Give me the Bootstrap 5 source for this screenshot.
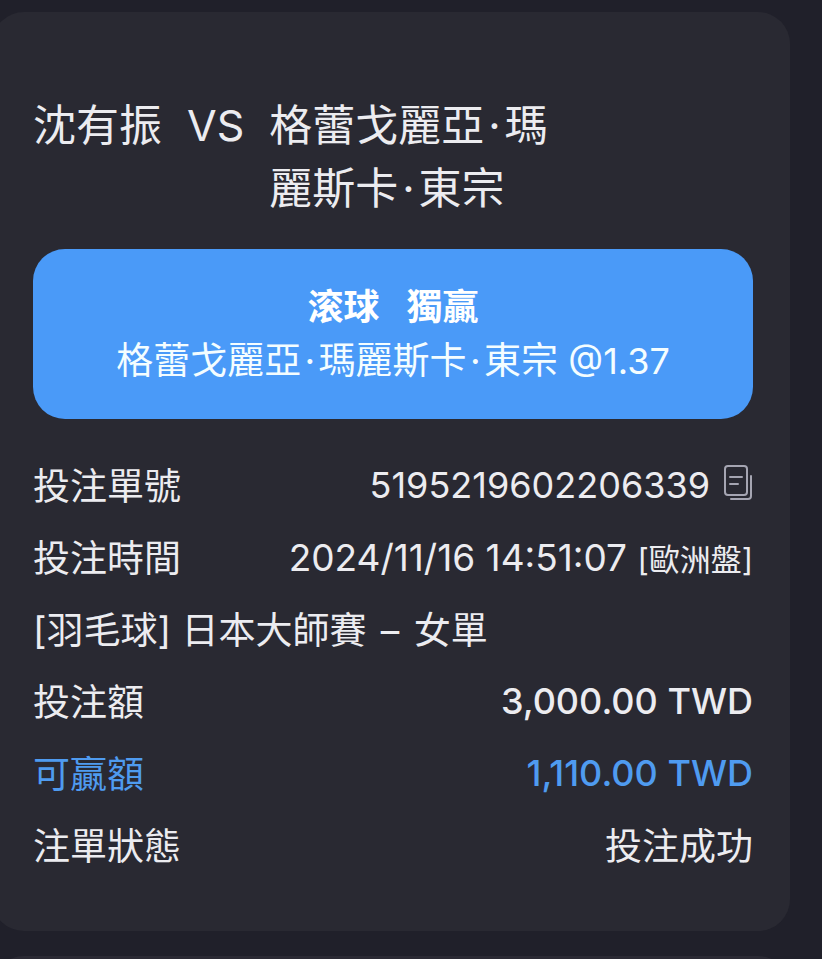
<!DOCTYPE html>
<html lang="zh-Hant">
<head>
<meta charset="utf-8">
<meta name="viewport" content="width=device-width, initial-scale=1">
<title>投注單</title>
<link href="https://cdn.jsdelivr.net/npm/bootstrap@5.3.0/dist/css/bootstrap.min.css" rel="stylesheet">
<style>
  body {
    background: #20202a;
    color: #ececf0;
    font-family: Inter, "Noto Sans CJK TC", sans-serif;
    font-size: 37px;
    line-height: 54px;
  }
  .page { height: 100vh; min-height: 956px; padding: 12px 32px 0 0; gap: 25px; }
  .slip {
    margin-left: -8px;
    padding: 82px 37px 48px 41px;
    border-radius: 32px;
    background: #292932;
  }
  .slip-next { height: 200px; margin-left: -8px; border-radius: 32px; background: #2b2a34; }
  .teams { font-size: 43px; line-height: 63px; gap: 25px; }
  .away { max-width: 284px; }
  .pick { margin-top: 29px; padding: 31px 24px; border-radius: 32px; background: #4a9af8; color: #f4fdff; }
  .pick-type { font-size: 36px; gap: 27px; color: #fff; }
  .details { margin-top: 32px; }
  .line { min-height: 72px; }
  .odds { font-size: 36px; }
  .num { font-size: 36px; padding-bottom: 4px; }
  .odds-kind { font-size: 31px; }
  .win { color: #4f9bf0; }
  .sep { margin: 0 4px; }
  .copy { width: 30px; height: 38px; margin: 0 0 8px 13px; color: #a5a5b2; }
</style>
<script src="https://cdn.jsdelivr.net/npm/bootstrap@5.3.0/dist/js/bootstrap.bundle.min.js"></script>
</head>
<body>
<main class="page d-flex flex-column overflow-hidden">
  <article class="slip flex-shrink-0">
    <div class="teams d-flex align-items-start">
      <span>沈有振</span>
      <span>VS</span>
      <span class="away">格蕾戈麗亞&#8202;·&#8202;瑪麗斯卡&#8202;·&#8202;東宗</span>
    </div>
    <div class="pick text-center">
      <div class="pick-type d-flex justify-content-center fw-bold"><span>滚球</span><span>獨贏</span></div>
      <div>格蕾戈麗亞&#8202;·&#8202;瑪麗斯卡&#8202;·&#8202;東宗 <span class="odds">@1.37</span></div>
    </div>
    <div class="details">
      <div class="line d-flex align-items-center justify-content-between">
        <span>投注單號</span>
        <span class="d-flex align-items-center"><span class="num">5195219602206339</span>
          <button type="button" class="copy btn border-0 p-0 d-flex" aria-label="複製">
            <svg width="30" height="38" viewBox="0 0 30 38" fill="none" stroke="currentColor" stroke-width="2" stroke-linecap="round" aria-hidden="true">
              <rect x="2" y="2" width="22" height="29" rx="3"/>
              <path d="M7 13h12M7 20h8M28 12v20a3 3 0 0 1-3 3H8"/>
            </svg>
          </button>
        </span>
      </div>
      <div class="line d-flex align-items-center justify-content-between">
        <span>投注時間</span>
        <span>2024/11/16 14:51:07 <span class="odds-kind">[歐洲盤]</span></span>
      </div>
      <div class="line d-flex align-items-center"><span>[羽毛球] 日本大師賽 <span class="sep">–</span> 女單</span></div>
      <div class="line d-flex align-items-center justify-content-between">
        <span>投注額</span><span class="num fw-medium">3,000.00 TWD</span>
      </div>
      <div class="line win d-flex align-items-center justify-content-between">
        <span>可贏額</span><span class="num fw-medium">1,110.00 TWD</span>
      </div>
      <div class="line d-flex align-items-center justify-content-between">
        <span>注單狀態</span><span>投注成功</span>
      </div>
    </div>
  </article>
  <div class="slip-next flex-shrink-0"></div>
</main>
</body>
</html>
